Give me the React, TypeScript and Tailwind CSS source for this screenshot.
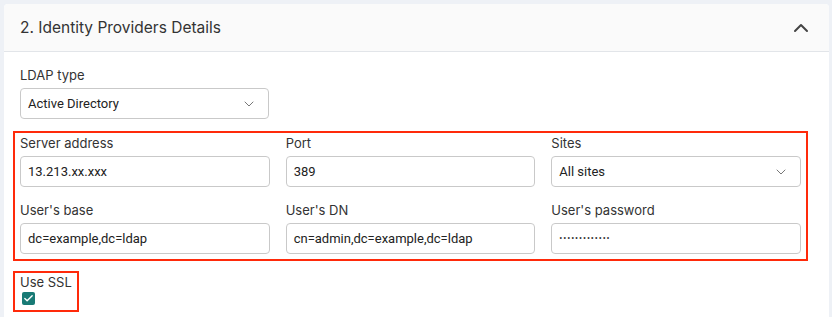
import React from 'react';
import { ChevronDown, ChevronUp, Check } from 'lucide-react';

const labelFont = "font-['Inter','Noto_Sans',sans-serif]";
const valueFont = "font-['Roboto','Liberation_Sans',sans-serif]";

interface FieldProps {
  label: string;
  value: string;
  select?: boolean;
  password?: boolean;
}

function Field({ label, value, select, password }: FieldProps) {
  return (
    <div className="flex flex-col">
      <label className={`${labelFont} text-[13px] leading-[18px] text-[#333] mb-1`}>{label}</label>
      <div className="h-[31px] flex items-center justify-between rounded-[4px] border border-[#c9c9c9] bg-white pl-[7px] pr-[11px]">
        {password ? (
          <span className={`${valueFont} text-[9px] tracking-[0.9px] text-[#333] leading-none`}>{'•'.repeat(13)}</span>
        ) : (
          <span className={`${valueFont} text-[13px] text-[#222]`}>{value}</span>
        )}
        {select && <ChevronDown size={16} strokeWidth={1.5} className="text-[#777]" />}
      </div>
    </div>
  );
}

export default function App() {
  return (
    <div className="min-h-screen bg-[#eef1f6] pl-1 pt-1">
      <div className="w-[825px] h-[320px] rounded-t-[4px] bg-white overflow-hidden">
        <div className="h-[48px] flex items-center justify-between bg-[#fafafa] border-b border-[#e2e5e9] pl-4 pr-4">
          <h2 className={`${labelFont} text-[15.5px] text-[#333]`}>2. Identity Providers Details</h2>
          <ChevronUp size={24} strokeWidth={2} className="text-[#444]" />
        </div>

        <div className="pl-4 pr-[28px] pt-[14px]">
          <div className="w-[249px]">
            <Field label="LDAP type" value="Active Directory" select />
          </div>

          <div className="mt-3 -mx-[7px] border-2 border-[#ff2a0a] px-[5px] pt-[1px] pb-[5px]">
            <div className="grid grid-cols-3 gap-x-4 gap-y-[14px]">
              <Field label="Server address" value="13.213.xx.xxx" />
              <Field label="Port" value="389" />
              <Field label="Sites" value="All sites" select />
              <Field label="User's base" value="dc=example,dc=ldap" />
              <Field label="User's DN" value="cn=admin,dc=example,dc=ldap" />
              <Field label="User's password" value="" password />
            </div>
          </div>

          <div className="mt-[10px] -ml-[7px] w-fit border-2 border-[#ff2a0a] px-[5px] pb-[5px]">
            <div className={`${labelFont} text-[13px] leading-[18px] text-[#333]`}>Use SSL</div>
            <div className="ml-[2px] mt-[1px] w-[13px] h-[13px] rounded-[2px] bg-[#187a75] flex items-center justify-center">
              <Check size={11} strokeWidth={3} className="text-white" />
            </div>
          </div>
        </div>
      </div>
    </div>
  );
}
